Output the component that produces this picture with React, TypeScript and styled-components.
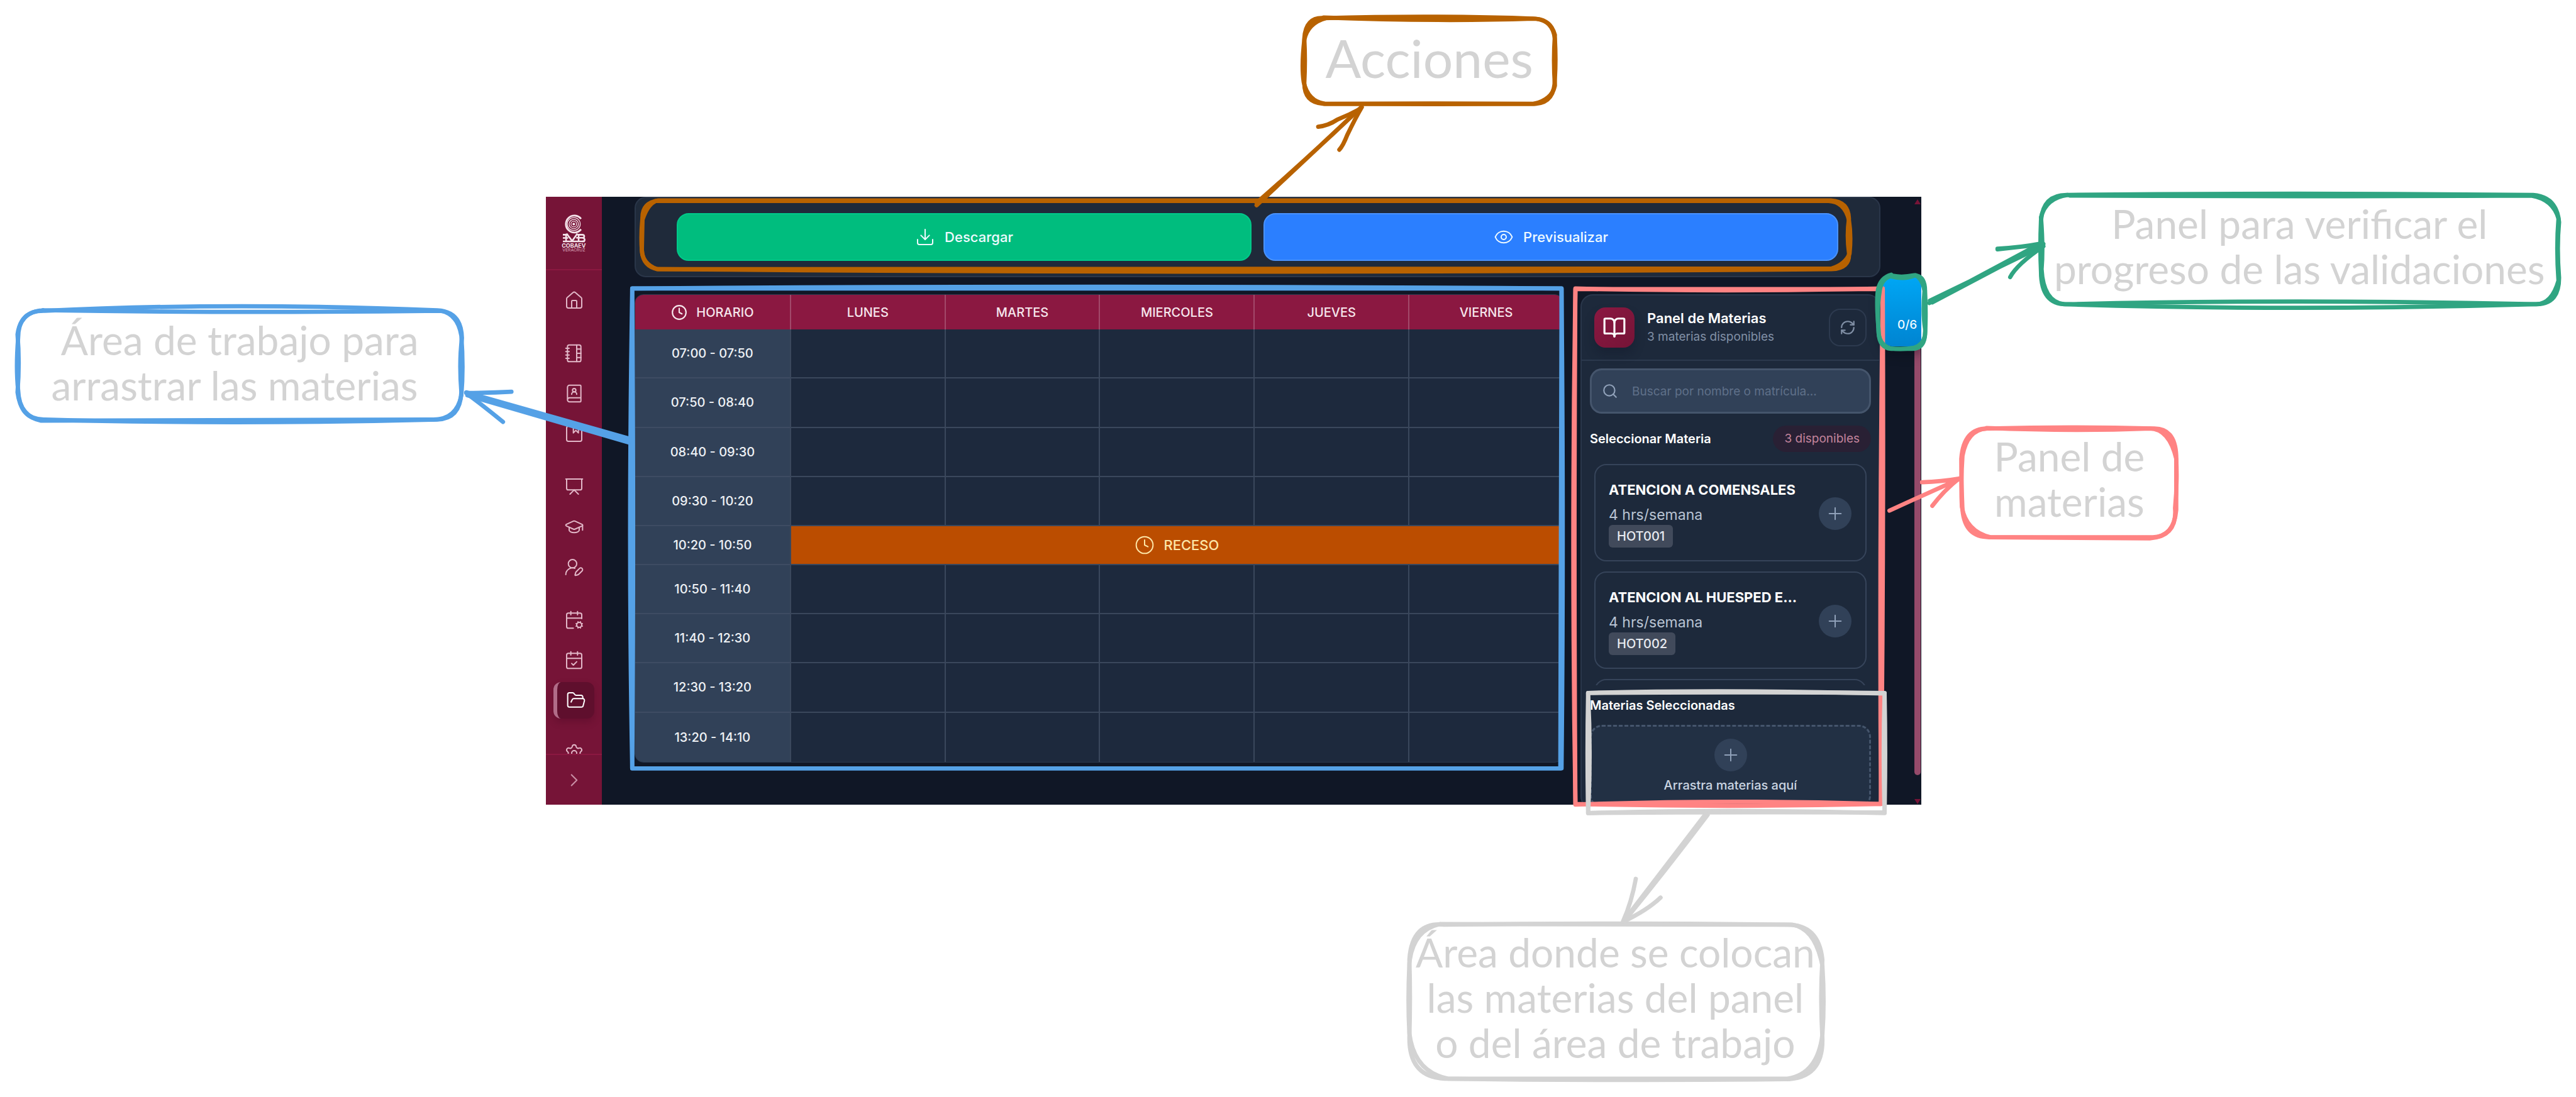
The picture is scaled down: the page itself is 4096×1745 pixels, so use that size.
import React from "react";
import styled, { createGlobalStyle } from "styled-components";
import {
  Album,
  BookOpen,
  BookUser,
  CalendarCheck,
  CalendarCog,
  ChevronRight,
  Clock,
  Download,
  Eye,
  FolderOpen,
  GraduationCap,
  House,
  NotebookTabs,
  Plus,
  Presentation,
  RefreshCw,
  Search,
  Settings,
  UserRoundPen,
} from "lucide-react";

/* Size of the board's own coordinate system, used by the hand drawn layer. */
const BOARD_W = 4266;
const BOARD_H = 1817;

const ink = {
  orange: "#b86200",
  blue: "#55a1e6",
  pink: "#ff8383",
  green: "#30a582",
  gray: "#d3d3d3",
};

const GlobalStyle = createGlobalStyle`
  *, *::before, *::after { box-sizing: border-box; }
  body { margin: 0; background: #ffffff; }
  button, input { font: inherit; color: inherit; margin: 0; }
`;

/* ---------- Board ---------- */

const Board = styled.main`
  position: relative;
  display: grid;
  grid-template-columns: 868fr 2187fr 1041fr;
  align-items: start;
  min-height: 100vh;
  padding-top: 313px;
  overflow: hidden;
  font-family: Inter, "Liberation Sans", sans-serif;
`;

const Ink = styled.svg`
  position: absolute;
  top: 0;
  left: 0;
  width: 100%;
  height: auto;
  pointer-events: none;
`;

const Note = styled.p<{ $center: number; $top: number; $big?: boolean }>`
  position: absolute;
  top: ${(p) => p.$top}px;
  left: ${(p) => (p.$center / BOARD_W) * 100}%;
  transform: translateX(-50%);
  margin: 0;
  color: ${ink.gray};
  font-family: Lato, "Open Sans", sans-serif;
  font-size: ${(p) => (p.$big ? 84 : 64)}px;
  line-height: ${(p) => (p.$big ? 104 : 72)}px;
  text-align: center;
  white-space: pre;
`;

/* ---------- App window ---------- */

const Window = styled.section`
  grid-column: 2;
  position: relative;
  display: flex;
  height: 967px;
  overflow: hidden;
  background: #101726;
  color: #ffffff;
`;

const Sidebar = styled.aside`
  display: flex;
  flex-direction: column;
  flex: none;
  width: 89px;
  background: #761437;
`;

const Brand = styled.div`
  display: flex;
  flex: none;
  justify-content: center;
  height: 117px;
  padding-top: 28px;
  border-bottom: 2px solid #8b1841;
`;

const Nav = styled.nav`
  display: flex;
  flex: 1;
  flex-direction: column;
  gap: 26px;
  min-height: 0;
  padding: 19px 12px 0;
  overflow: hidden;
`;

const NavGroup = styled.div`
  display: flex;
  flex: none;
  flex-direction: column;
  gap: 6px;
`;

const NavLink = styled.a<{ $active?: boolean }>`
  display: flex;
  align-items: center;
  justify-content: center;
  height: 58px;
  border-radius: 12px;
  color: ${(p) => (p.$active ? "#ffffff" : "#e2b8c8")};
  background: ${(p) => (p.$active ? "#5f0f2d" : "transparent")};
  border-left: ${(p) => (p.$active ? "6px solid #b16c88" : "0")};
  box-shadow: ${(p) => (p.$active ? "0 6px 12px rgba(60, 5, 28, 0.25)" : "none")};
`;

const Expand = styled.button`
  display: flex;
  flex: none;
  align-items: center;
  justify-content: center;
  height: 81px;
  padding: 0;
  border: 0;
  border-top: 2px solid #8b1841;
  background: transparent;
  color: #c98fa5;
`;

const Content = styled.div`
  display: flex;
  flex: 1;
  flex-direction: column;
  gap: 27px;
  min-width: 0;
  padding: 0 53px 0 52px;
`;

const Actions = styled.div`
  display: flex;
  gap: 19px;
  flex: none;
  padding: 24px 65px;
  border: 2px solid #2a3649;
  border-radius: 18px;
  background: #1f2a3a;
`;

const ActionButton = styled.button<{ $fill: string; $edge: string }>`
  display: flex;
  flex: 1;
  align-items: center;
  justify-content: center;
  gap: 15px;
  height: 76px;
  padding: 0;
  border: 2px solid ${(p) => p.$edge};
  border-radius: 19px;
  background: ${(p) => p.$fill};
  color: #effaff;
  font-size: 22px;
  font-weight: 500;
`;

const Columns = styled.div`
  display: flex;
  gap: 27px;
  align-items: flex-start;
`;

/* ---------- Timetable ---------- */

const TableFrame = styled.div`
  flex: 1;
  min-width: 0;
  overflow: hidden;
  border: 1px solid #2b394e;
  border-radius: 14px;
  background: #1d293d;
`;

const Timetable = styled.table`
  width: 100%;
  height: 743px;
  border-collapse: separate;
  border-spacing: 0;
  table-layout: fixed;
  font-size: 20px;
  font-weight: 500;
  text-align: center;
`;

const DayHead = styled.th`
  height: 55px;
  padding: 0;
  background: #8b1841;
  color: #f6e6ec;
  font-weight: 500;
  & + & {
    border-left: 2px solid #a2496a;
  }
`;

const HourHead = styled.th<{ $last?: boolean }>`
  padding: 0;
  border-bottom: ${(p) => (p.$last ? "0" : "2px solid #3e4c63")};
  background: #314158;
  color: #eef1f5;
  font-weight: 500;
`;

const Slot = styled.td<{ $last?: boolean }>`
  padding: 0;
  border-left: 2px solid #3a475c;
  border-bottom: ${(p) => (p.$last ? "0" : "2px solid #3a475c")};
`;

const BreakCell = styled.td`
  padding: 0;
  border-left: 2px solid #3a475c;
  border-bottom: 2px solid #3a475c;
  background: #bb4d00;
  color: #fde6a8;
  font-size: 22px;
`;

const Inline = styled.span`
  display: flex;
  align-items: center;
  justify-content: center;
  gap: 14px;
`;

const Row = styled.tr<{ $short?: boolean }>`
  height: ${(p) => (p.$short ? 61 : 78)}px;
`;

/* ---------- Subjects panel ---------- */

const Panel = styled.section`
  flex: none;
  width: 21.8%;
  min-width: 477px;
  border: 2px solid #2a374b;
  border-radius: 20px;
  background: #1d293b;
`;

const PanelHead = styled.header`
  display: flex;
  align-items: center;
  gap: 20px;
  height: 104px;
  padding: 0 20px;
  border-bottom: 2px solid #2c394d;
`;

const BookTile = styled.span`
  display: flex;
  flex: none;
  align-items: center;
  justify-content: center;
  width: 64px;
  height: 64px;
  border-radius: 18px;
  background: linear-gradient(135deg, #8b1841, #761437);
  box-shadow: 0 10px 16px rgba(10, 16, 30, 0.25);
`;

const HeadText = styled.div`
  flex: 1;
`;

const PanelTitle = styled.h2`
  margin: 0;
  font-size: 22px;
  line-height: 30px;
  font-weight: 600;
`;

const PanelSub = styled.p`
  margin: 0;
  color: #8190a6;
  font-size: 19px;
  line-height: 30px;
`;

const Refresh = styled.button`
  display: flex;
  align-items: center;
  justify-content: center;
  width: 60px;
  height: 60px;
  padding: 0;
  border: 2px solid #2d3a4f;
  border-radius: 18px;
  background: transparent;
  color: #8190a6;
`;

const PanelBody = styled.div`
  padding: 12px 13px 0;
`;

const SearchBox = styled.label`
  display: flex;
  align-items: center;
  gap: 22px;
  height: 72px;
  padding: 0 16px;
  border: 3px solid #45556c;
  border-radius: 19px;
  background: #314158;
  color: #90a1b9;
`;

const SearchInput = styled.input`
  flex: 1;
  min-width: 0;
  padding: 0;
  border: 0;
  outline: 0;
  background: transparent;
  font-size: 19px;
  &::placeholder {
    color: #5f7089;
    opacity: 1;
  }
`;

const SectionHead = styled.div`
  display: flex;
  align-items: center;
  justify-content: space-between;
  margin-top: 19px;
`;

const SectionTitle = styled.h3`
  margin: 0;
  font-size: 20px;
  line-height: 42px;
  font-weight: 600;
`;

const Pill = styled.span`
  padding: 0 18px;
  border-radius: 21px;
  background: #292034;
  color: #c4849c;
  font-size: 19px;
  line-height: 42px;
`;

const SubjectList = styled.ul`
  display: flex;
  flex-direction: column;
  gap: 16px;
  height: 371px;
  margin: 0 0 11px;
  padding: 19px 7px 0;
  overflow: hidden;
  list-style: none;
`;

const Subject = styled.li`
  display: flex;
  flex: none;
  align-items: center;
  justify-content: space-between;
  gap: 20px;
  height: 155px;
  padding: 2px 22px 0 21px;
  border: 2px solid #36445a;
  border-radius: 19px;
`;

const SubjectText = styled.div`
  flex: 1;
  min-width: 0;
`;

const SubjectName = styled.h4`
  margin: 0 0 8px;
  font-size: 22px;
  line-height: 32px;
  font-weight: 700;
  white-space: nowrap;
`;

const SubjectHours = styled.p`
  margin: 0;
  color: #b9c4d3;
  font-size: 23px;
  line-height: 32px;
`;

const Code = styled.span`
  display: inline-block;
  padding: 0 13px;
  border-radius: 6px;
  background: #414a5b;
  color: #e7eaf0;
  font-size: 20px;
  line-height: 36px;
  font-weight: 500;
`;

const RoundButton = styled.button`
  display: flex;
  flex: none;
  align-items: center;
  justify-content: center;
  width: 52px;
  height: 52px;
  padding: 0;
  border: 0;
  border-radius: 50%;
  background: #314158;
  color: #90a1b9;
`;

const DropZone = styled.div`
  display: flex;
  flex-direction: column;
  align-items: center;
  gap: 8px;
  margin-top: 10px;
  padding: 19px;
  border: 3px dashed #45556c;
  border-radius: 19px;
  background: #223044;
  color: #cad5e2;
  font-size: 20px;
  line-height: 28px;
  font-weight: 500;
`;

/* ---------- Window overlays ---------- */

const Scrollbar = styled.div`
  display: flex;
  flex: none;
  flex-direction: column;
  align-items: center;
  width: 12px;
  padding: 4px 0 1px;
`;

const Thumb = styled.div`
  flex: 1;
  width: 10px;
  margin: 160px 0 38px;
  border-radius: 5px;
  background: #954a6a;
`;

const Arrow = styled.span<{ $down?: boolean }>`
  border-left: 5px solid transparent;
  border-right: 5px solid transparent;
  border-bottom: ${(p) => (p.$down ? "0" : "8px solid #761437")};
  border-top: ${(p) => (p.$down ? "8px solid #761437" : "0")};
`;

const ProgressTab = styled.button`
  position: absolute;
  top: 128px;
  right: 0;
  display: flex;
  align-items: flex-end;
  width: 62px;
  height: 110px;
  padding: 0 0 20px 24px;
  border: 0;
  border-radius: 16px 0 0 16px;
  background: linear-gradient(#00a6f4, #0084d1);
  box-shadow: 0 10px 18px rgba(5, 10, 22, 0.5);
  color: #f1faff;
  font-size: 19px;
  line-height: 28px;
  font-weight: 500;
`;

/* ---------- Data ---------- */

const navGroups = [
  [{ label: "Inicio", icon: House }],
  [
    { label: "Planes", icon: NotebookTabs },
    { label: "Directorio", icon: BookUser },
    { label: "Materias", icon: Album },
  ],
  [
    { label: "Aulas", icon: Presentation },
    { label: "Grupos", icon: GraduationCap },
    { label: "Docentes", icon: UserRoundPen },
  ],
  [
    { label: "Periodos", icon: CalendarCog },
    { label: "Horarios", icon: CalendarCheck },
    { label: "Archivos", icon: FolderOpen, active: true },
  ],
  [{ label: "Ajustes", icon: Settings }],
] as { label: string; icon: React.ElementType; active?: boolean }[][];

const days = ["LUNES", "MARTES", "MIERCOLES", "JUEVES", "VIERNES"];

const hours = [
  "07:00 - 07:50",
  "07:50 - 08:40",
  "08:40 - 09:30",
  "09:30 - 10:20",
  "10:20 - 10:50",
  "10:50 - 11:40",
  "11:40 - 12:30",
  "12:30 - 13:20",
  "13:20 - 14:10",
];
const breakHour = "10:20 - 10:50";

const subjects = [
  { name: "ATENCION A COMENSALES", code: "HOT001" },
  { name: "ATENCION AL HUESPED E...", code: "HOT002" },
  { name: "", code: "" },
];

/* Each stroke group is one pen colour: every outline is traced twice. */
const strokes = [
  {
    color: ink.orange,
    paths: [
      "M1090 332H3032Q3061 334 3062 362Q3058 390 3062 419Q3064 445 3033 446Q2060 454 1090 446Q1065 442 1063 415Q1061 390 1064 360Q1064 336 1090 332",
      "M1086 333H3028Q3055 334 3062 365Q3066 390 3063 420Q3056 438 3033 445Q2060 448 1088 446Q1062 436 1063 412L1064 364Q1072 340 1084 334",
      "M2192 30Q2380 25 2543 31Q2571 33 2575 64Q2577 100 2575 130Q2575 170 2543 172Q2370 171 2192 172Q2160 170 2160 138Q2162 100 2160 64Q2162 28 2192 30",
      "M2192 29Q2380 36 2538 31Q2568 31 2575 58Q2572 100 2575 142Q2570 165 2540 172Q2370 173 2194 172Q2166 168 2159 136Q2155 110 2160 66Q2166 38 2196 30",
      "M2081 340L2255 177M2081 336Q2170 258 2252 180",
      "M2183 210Q2200 208 2215 198Q2235 190 2253 180M2218 248Q2224 242 2231 224Q2245 195 2255 178",
    ],
  },
  {
    color: ink.blue,
    paths: [
      "M1047 478Q1800 472 2586 478Q2590 900 2586 1273Q1800 1272 1047 1273Q1040 900 1047 478",
      "M1047 478H2586Q2584 900 2584 1273H1047Q1050 900 1047 478",
      "M74 515Q380 500 724 514Q764 516 765 560Q760 600 764 650Q762 694 724 695Q380 704 74 695Q32 696 30 646Q26 610 30 560Q30 514 74 515",
      "M70 514Q400 519 730 515Q758 520 764 556Q768 610 764 655Q756 696 716 695Q380 695 68 697Q34 690 29 650Q33 600 29 554Q34 516 72 514",
      "M772 650L1043 727M774 655L1041 733M790 655L900 690",
      "M772 651Q810 651 847 649M773 652Q800 672 833 699",
    ],
  },
  {
    color: ink.pink,
    paths: [
      "M2609 478Q2850 484 3118 478Q3120 900 3115 1332Q2860 1324 2609 1333Q2602 900 2609 478",
      "M2609 479H3118Q3112 900 3115 1332Q2860 1338 2609 1332Q2606 900 2609 479",
      "M3294 710Q3430 706 3565 710Q3602 708 3604 755Q3604 800 3604 845Q3600 890 3565 890Q3430 890 3294 890Q3254 890 3250 845Q3248 800 3248 760Q3252 708 3294 710",
      "M3290 709Q3430 715 3560 710Q3592 710 3604 760Q3606 800 3602 842Q3606 888 3560 892Q3430 891 3296 890Q3256 880 3249 840Q3247 800 3250 755Q3258 712 3290 710",
      "M3129 846Q3190 818 3244 794M3183 799Q3215 798 3244 793M3200 838Q3220 812 3244 793",
    ],
  },
  {
    color: ink.green,
    paths: [
      "M3136 457Q3150 460 3170 456Q3188 457 3188 482Q3190 520 3188 555Q3186 578 3166 578H3132Q3112 576 3111 550Q3108 510 3113 482Q3116 458 3136 457",
      "M3132 458Q3155 464 3172 456Q3184 462 3187 482Q3184 520 3188 545Q3190 570 3170 576Q3150 580 3130 577Q3110 570 3111 545Q3107 500 3110 480Q3114 460 3132 455",
      "M3424 323Q3800 319 4195 323Q4234 326 4238 368Q4234 410 4238 460Q4238 504 4200 504Q3800 495 3424 504Q3380 506 3380 450Q3378 410 3380 365Q3384 322 3424 323",
      "M3428 324Q3800 326 4192 324Q4228 330 4237 362Q4233 410 4237 465Q4226 504 4200 504Q3800 516 3418 504Q3384 500 3381 446Q3384 410 3380 360Q3388 328 3424 323",
      "M3195 502L3382 402M3196 498L3382 408M3200 501L3384 404",
      "M3308 412Q3345 410 3382 403M3308 413L3380 405M3329 459Q3340 438 3384 408",
    ],
  },
  {
    color: ink.gray,
    paths: [
      "M2630 1148Q2850 1142 3121 1149Q3118 1250 3121 1347Q2870 1340 2630 1347Q2628 1250 2630 1148",
      "M2630 1148Q2850 1146 3121 1148Q3123 1250 3121 1346Q2870 1345 2630 1347Q2635 1250 2630 1148",
      "M2392 1532Q2680 1528 2960 1532Q3012 1532 3018 1590Q3014 1650 3018 1720Q3020 1788 2955 1788Q2680 1791 2392 1787Q2334 1784 2334 1720Q2336 1650 2334 1590Q2338 1526 2392 1532",
      "M2385 1531Q2680 1532 2968 1532Q3006 1538 3018 1600Q3022 1660 3018 1714Q3010 1780 2960 1787Q2680 1787 2398 1787Q2342 1776 2334 1712Q2331 1660 2334 1596Q2340 1540 2385 1531",
      "M2825 1348L2688 1527M2828 1350Q2760 1440 2690 1526",
      "M2709 1456Q2702 1495 2688 1526M2750 1487Q2728 1508 2688 1527",
    ],
  },
];

/* ---------- Parts ---------- */

const Logo = () => (
  <svg width="43" height="60" viewBox="0 0 133 187" fill="none" stroke="#f4e3ea">
    <path d="M102 22A42 42 0 1 0 102 74" strokeWidth="9" />
    <circle cx="66" cy="48" r="32" strokeWidth="4" />
    <circle cx="66" cy="48" r="23" strokeWidth="4" />
    <circle cx="66" cy="48" r="14" strokeWidth="4" />
    <circle cx="66" cy="48" r="6" fill="#f4e3ea" />
    <path d="M12 101H38M12 117H38M12 134H120M28 96V138M30 95L58 132L84 95" strokeWidth="8" />
    <path d="M84 101H108Q118 101 118 109Q118 116 108 116H78M108 116Q120 117 120 126Q120 134 108 134M90 98V134" strokeWidth="8" />
    <text x="66" y="164" textAnchor="middle" fontSize="28" fontWeight="700" fill="#f4e3ea" stroke="none">
      COBAEV
    </text>
    <text x="66" y="184" textAnchor="middle" fontSize="21" fontWeight="500" fill="#cf98ad" stroke="none">
      VERACRUZ
    </text>
  </svg>
);

const Menu = () => (
  <Sidebar>
    <Brand>
      <Logo />
    </Brand>
    <Nav>
      {navGroups.map((group, i) => (
        <NavGroup key={i}>
          {group.map(({ label, icon: Icon, active }) => (
            <NavLink key={label} href="#" aria-label={label} $active={active}>
              <Icon size={32} strokeWidth={1.5} />
            </NavLink>
          ))}
        </NavGroup>
      ))}
    </Nav>
    <Expand aria-label="Expandir">
      <ChevronRight size={34} strokeWidth={1.5} />
    </Expand>
  </Sidebar>
);

const Schedule = () => (
  <TableFrame>
    <Timetable>
      <thead>
        <tr>
          <DayHead scope="col">
            <Inline>
              <Clock size={26} strokeWidth={2} />
              HORARIO
            </Inline>
          </DayHead>
          {days.map((day) => (
            <DayHead key={day} scope="col">
              {day}
            </DayHead>
          ))}
        </tr>
      </thead>
      <tbody>
        {hours.map((hour, i) => {
          const last = i === hours.length - 1;
          return (
            <Row key={hour} $short={hour === breakHour}>
              <HourHead scope="row" $last={last}>
                {hour}
              </HourHead>
              {hour === breakHour ? (
                <BreakCell colSpan={days.length}>
                  <Inline>
                    <Clock size={32} strokeWidth={1.5} />
                    RECESO
                  </Inline>
                </BreakCell>
              ) : (
                days.map((day) => <Slot key={day} $last={last} />)
              )}
            </Row>
          );
        })}
      </tbody>
    </Timetable>
  </TableFrame>
);

const SubjectsPanel = () => (
  <Panel>
    <PanelHead>
      <BookTile>
        <BookOpen size={38} />
      </BookTile>
      <HeadText>
        <PanelTitle>Panel de Materias</PanelTitle>
        <PanelSub>3 materias disponibles</PanelSub>
      </HeadText>
      <Refresh aria-label="Actualizar">
        <RefreshCw size={26} />
      </Refresh>
    </PanelHead>
    <PanelBody>
      <SearchBox>
        <Search size={26} />
        <SearchInput type="text" aria-label="Buscar" placeholder="Buscar por nombre o matrícula..." />
      </SearchBox>
      <SectionHead>
        <SectionTitle>Seleccionar Materia</SectionTitle>
        <Pill>3 disponibles</Pill>
      </SectionHead>
      <SubjectList>
        {subjects.map((subject, i) => (
          <Subject key={i}>
            {subject.name && (
              <>
                <SubjectText>
                  <SubjectName>{subject.name}</SubjectName>
                  <SubjectHours>4 hrs/semana</SubjectHours>
                  <Code>{subject.code}</Code>
                </SubjectText>
                <RoundButton aria-label={"Agregar " + subject.name}>
                  <Plus size={32} strokeWidth={1.5} />
                </RoundButton>
              </>
            )}
          </Subject>
        ))}
      </SubjectList>
      <SectionTitle>Materias Seleccionadas</SectionTitle>
      <DropZone>
        <RoundButton aria-label="Agregar materia">
          <Plus size={32} strokeWidth={1.5} />
        </RoundButton>
        Arrastra materias aquí
      </DropZone>
    </PanelBody>
  </Panel>
);

export default function App() {
  return (
    <>
      <GlobalStyle />
      <Board>
        <Window>
          <Menu />
          <Content>
            <Actions>
              <ActionButton $fill="#00bd7e" $edge="#00c98a">
                <Download size={32} strokeWidth={1.5} />
                Descargar
              </ActionButton>
              <ActionButton $fill="#2b7fff" $edge="#4a93ff">
                <Eye size={32} strokeWidth={1.5} />
                Previsualizar
              </ActionButton>
            </Actions>
            <Columns>
              <Schedule />
              <SubjectsPanel />
            </Columns>
          </Content>
          <Scrollbar>
            <Arrow />
            <Thumb />
            <Arrow $down />
          </Scrollbar>
          <ProgressTab>0/6</ProgressTab>
        </Window>

        <Ink viewBox={`0 0 ${BOARD_W} ${BOARD_H}`} fill="none" strokeWidth="7" strokeLinecap="round" strokeLinejoin="round">
          {strokes.map((group) => (
            <g key={group.color} stroke={group.color}>
              {group.paths.map((d) => (
                <path key={d} d={d} />
              ))}
            </g>
          ))}
        </Ink>

        <Note $center={2367} $top={40} $big>
          Acciones
        </Note>
        <Note $center={3808} $top={320}>
          {"Panel para verificar el\nprogreso de las validaciones"}
        </Note>
        <Note $center={397} $top={505}>
          {"Área de trabajo para\narrastrar las materias\u00a0"}
        </Note>
        <Note $center={3427} $top={690}>
          {"Panel de\nmaterias"}
        </Note>
        <Note $center={2675} $top={1479}>
          {"Área donde se colocan\nlas materias del panel\no del área de trabajo"}
        </Note>
      </Board>
    </>
  );
}
